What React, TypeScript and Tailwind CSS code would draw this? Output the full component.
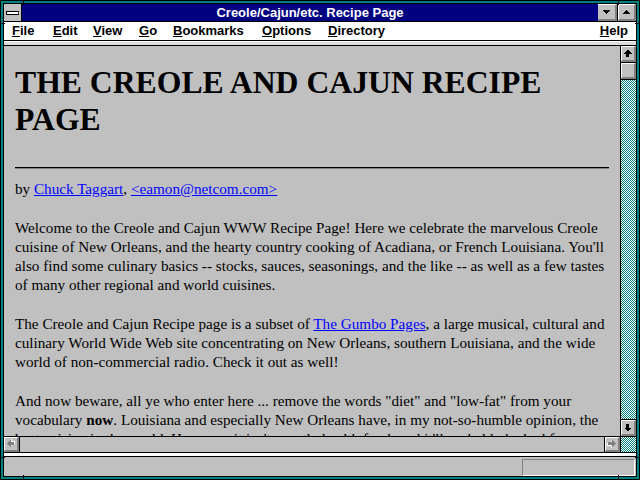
import React from "react";

function Bevel({ className = "", children }: { className?: string; children?: React.ReactNode }) {
  return (
    <div
      className={
        "flex items-center justify-center bg-[#c0c0c0] border-t border-l border-t-white border-l-white border-r-2 border-b-2 border-r-[#808080] border-b-[#808080] " +
        className
      }
    >
      {children}
    </div>
  );
}

function Arrow({ dir, disabled = false }: { dir: "up" | "down" | "left" | "right"; disabled?: boolean }) {
  const rot = dir === "up" ? 0 : dir === "down" ? 180 : dir === "left" ? -90 : 90;
  const pts = "4.5,0.5 8.5,4.5 6,4.5 6,8 3,8 3,4.5 0.5,4.5";
  return (
    <svg width="10" height="10" viewBox="0 0 10 10" shapeRendering="crispEdges">
      <g transform={`rotate(${rot} 4.5 4.5)`}>
        {disabled && <polygon points={pts} fill="#ffffff" transform="translate(1 1)" />}
        <polygon points={pts} fill={disabled ? "#808080" : "#000000"} />
      </g>
    </svg>
  );
}

const dither =
  "bg-[image:repeating-conic-gradient(#008080_0%_25%,#ffffff_0%_50%)] bg-[length:2px_2px]";

export default function App() {
  return (
    <div className="relative w-[640px] h-[480px] border border-black bg-[#008080] font-['Liberation_Sans',Arial,sans-serif]">
      <div className="w-full h-full border-2 border-[#008080]">
        <div className="w-full h-full border border-black flex flex-col bg-[#c0c0c0]">
          {/* Title bar */}
          <div className="flex h-[18px] border-b border-black shrink-0">
            <div className="w-[18px] h-full bg-[#c0c0c0] border-r border-black flex items-center justify-center">
              <div className="w-[13px] h-[4px] bg-white border border-black border-r-[#404040]" />
            </div>
            <div className="flex-1 bg-[#000080] flex items-center justify-center text-white font-bold text-[13px] leading-[17px]">
              Creole/Cajun/etc. Recipe Page
            </div>
            <Bevel className="w-[19px] h-full border-l-0">
              <svg width="7" height="4" viewBox="0 0 7 4" shapeRendering="crispEdges">
                <polygon points="0,0 7,0 3.5,4" fill="#000" />
              </svg>
            </Bevel>
            <div className="w-px h-full bg-black" />
            <Bevel className="w-[18px] h-full">
              <svg width="7" height="4" viewBox="0 0 7 4" shapeRendering="crispEdges">
                <polygon points="0,4 7,4 3.5,0" fill="#000" />
              </svg>
            </Bevel>
          </div>

          {/* Menu bar */}
          <div className="flex h-[19px] bg-white border-b border-black shrink-0 pl-[8px] pr-[8px] text-[13px] leading-[18px] font-bold text-black">
            <span className="w-[41px]"><span className="underline">F</span>ile</span>
            <span className="w-[40px]"><span className="underline">E</span>dit</span>
            <span className="w-[46px]"><span className="underline">V</span>iew</span>
            <span className="w-[34px]"><span className="underline">G</span>o</span>
            <span className="w-[89px]"><span className="underline">B</span>ookmarks</span>
            <span className="w-[66px]"><span className="underline">O</span>ptions</span>
            <span><span className="underline">D</span>irectory</span>
            <span className="ml-auto"><span className="underline">H</span>elp</span>
          </div>

          {/* separator band */}
          <div className="h-[5px] shrink-0 border-t border-white bg-[#dcdcdc] border-b border-b-black" />

          {/* Main area */}
          <div className="grid grid-cols-[1fr_16px] grid-rows-[1fr_16px] h-[406px] shrink-0">
            <div className="overflow-hidden bg-[#c0c0c0] pt-[18px] pl-[11px] pr-[11px] text-black font-['Liberation_Serif','Times_New_Roman',serif] text-[15.2px] leading-[19px]">
              <h1 className="text-[31.7px] leading-[37px] font-bold">
                THE CREOLE AND CAJUN RECIPE
                <br />
                PAGE
              </h1>
              <div className="mt-[29px] h-[2px] border-t border-black border-b border-b-[#808080]" />
              <p className="mt-[10px] whitespace-nowrap">
                by <a className="text-[#0000ff] underline">Chuck Taggart</a>,{" "}
                <a className="text-[#0000ff] underline">&lt;eamon@netcom.com&gt;</a>
              </p>
              <p className="mt-[20px] whitespace-nowrap">
                Welcome to the Creole and Cajun WWW Recipe Page! Here we celebrate the marvelous Creole
                <br />
                cuisine of New Orleans, and the hearty country cooking of Acadiana, or French Louisiana. You'll
                <br />
                also find some culinary basics -- stocks, sauces, seasonings, and the like -- as well as a few tastes
                <br />
                of many other regional and world cuisines.
              </p>
              <p className="mt-[20px] whitespace-nowrap">
                The Creole and Cajun Recipe page is a subset of{" "}
                <a className="text-[#0000ff] underline">The Gumbo Pages</a>, a large musical, cultural and
                <br />
                culinary World Wide Web site concentrating on New Orleans, southern Louisiana, and the wide
                <br />
                world of non-commercial radio. Check it out as well!
              </p>
              <p className="mt-[20px] whitespace-nowrap">
                And now beware, all ye who enter here ... remove the words "diet" and "low-fat" from your
                <br />
                vocabulary <b>now</b>. Louisiana and especially New Orleans have, in my not-so-humble opinion, the
                <br />
                best cuisine in the world. However, it isn't exactly health food, and it'll probably be bad for
              </p>
            </div>

            {/* Vertical scrollbar */}
            <div className="flex flex-col border-l border-black">
              <Bevel className="h-[16px] shrink-0">
                <Arrow dir="up" />
              </Bevel>
              <div className="h-px bg-black shrink-0" />
              <Bevel className="h-[16px] shrink-0" />
              <div className="h-px bg-black shrink-0" />
              <div className={"flex-1 " + dither} />
              <div className="h-px bg-black shrink-0" />
              <Bevel className="h-[16px] shrink-0">
                <Arrow dir="down" />
              </Bevel>
            </div>

            {/* Horizontal scrollbar */}
            <div className="flex border-t border-black bg-[#c0c0c0]">
              <Bevel className="w-[15px] h-full shrink-0">
                <Arrow dir="left" disabled />
              </Bevel>
              <div className="w-px bg-black shrink-0" />
              <div className="flex-1" />
              <div className="w-px bg-black shrink-0" />
              <Bevel className="w-[15px] h-full shrink-0">
                <Arrow dir="right" disabled />
              </Bevel>
            </div>
            <div className={"border-t border-l border-black " + dither} />
          </div>

          {/* lower separator */}
          <div className="h-[5px] shrink-0 border-t border-black bg-white border-b border-b-black" />

          {/* Status bar */}
          <div className="flex-1 flex justify-end items-start pt-[2px] pr-[1px] bg-[#c0c0c0]">
            <div className="w-[113px] h-[17px] border-t border-l border-[#808080] border-r border-b border-r-white border-b-white" />
          </div>
        </div>
      </div>

      {/* window resize border marks */}
      <div className="absolute left-[22px] top-0 w-px h-[4px] bg-black" />
      <div className="absolute left-[617px] top-0 w-px h-[4px] bg-black" />
      <div className="absolute left-[22px] bottom-0 w-px h-[4px] bg-black" />
      <div className="absolute left-[617px] bottom-0 w-px h-[4px] bg-black" />
      <div className="absolute left-0 top-[22px] w-[4px] h-px bg-black" />
      <div className="absolute right-0 top-[22px] w-[4px] h-px bg-black" />
      <div className="absolute left-0 top-[456px] w-[4px] h-px bg-black" />
      <div className="absolute right-0 top-[456px] w-[4px] h-px bg-black" />
    </div>
  );
}
